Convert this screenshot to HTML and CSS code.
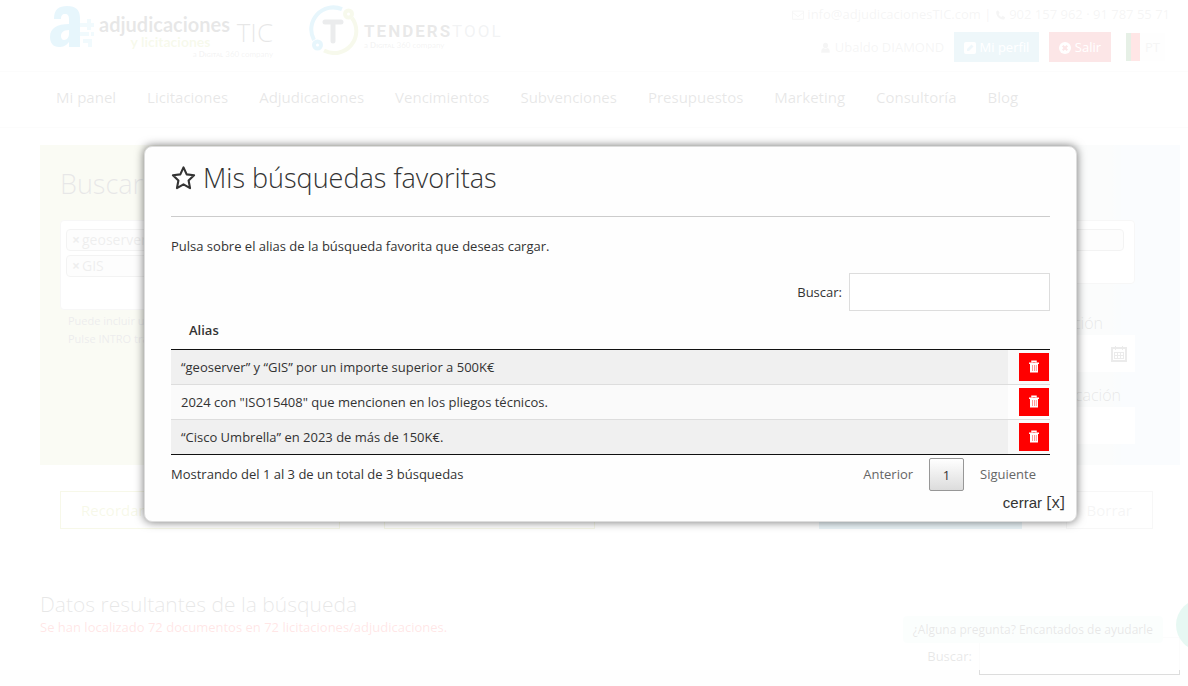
FILE: index.html
```html
<!DOCTYPE html>
<html lang="es">
<head>
<meta charset="utf-8">
<title>Mis búsquedas favoritas</title>
<link rel="stylesheet" href="styles.css">
</head>
<body>
<div class="page">
  <header class="header">
    <div class="brands">
      <a class="brand" href="#">
        <svg class="brand-mark" viewBox="0 0 46 46" aria-hidden="true">
          <path class="mark-blue" fill-rule="evenodd" d="M4 14C4 4 9 1 17 1c9 0 13 4 13 12v29H19v-5c-3 4-6 5-10 5C3 42 0 38 0 32c0-9 7-13 19-13v-5c0-3-1-5-4-5s-4 2-4 5zM19 25c-6 0-8 3-8 6 0 2 1 4 3 4 3 0 5-3 5-6z"/>
          <path class="mark-sky" d="M20 15h10v3h7v-4h4v4h3v4h-3v3h-4v-3h-7v5h9v4h-9v11H20zM41 27h3v4h-3zM33 34h9v8h-4v-4h-5z"/>
        </svg>
        <span class="brand-words">
          <span class="brand-name">adjudicaciones</span>
          <span class="brand-sub">y licitaciones</span>
        </span>
        <span class="brand-tic"><span class="tic">TIC</span><span class="company">a <b>Digital</b> 360 company</span></span>
      </a>
      <a class="brand tenders" href="#">
        <svg class="tenders-mark" viewBox="0 0 50 50" aria-hidden="true">
          <g fill="none" stroke-width="4">
            <path stroke="#0d9fe0" d="M33 4.200A22 22 0 0 0 5 35"/>
            <circle stroke="#0d9fe0" cx="8.500" cy="40" r="3.500"/>
            <path stroke="#a9c23f" d="M43 13A22 22 0 0 1 15 45.500"/>
            <circle stroke="#a9c23f" cx="39.500" cy="9" r="3.500"/>
            <path stroke="#33414d" stroke-width="5" stroke-linecap="round" d="M16 17h16M24 17v19"/>
          </g>
        </svg>
        <span class="tenders-words">
          <span class="tenders-name"><b>TENDERS</b>TOOL</span>
          <span class="company">a <b>Digital</b> 360 company</span>
        </span>
      </a>
    </div>
    <div class="account">
      <div class="contact">
        <svg class="ico" viewBox="0 0 14 14" aria-hidden="true"><path fill="none" stroke="currentColor" d="M.5 2.500h13v9.500H.5zM.5 4l6.500 5 6.500-5"/></svg>
        <a href="#">info@adjudicacionesTIC.com</a> |
        <svg class="ico phone" viewBox="0 0 12 14" aria-hidden="true"><path fill="currentColor" d="M1 3l2-1.500 2 3L4 6c.7 1.500 1.500 2.500 3 3.200L8.500 8l3 1.700L10.500 12C6 13.500 0 8 1 3z"/></svg>
        902 157 962 · 91 787 55 71
      </div>
      <div class="user-row">
        <span class="user"><svg class="ico user-ico" viewBox="0 0 12 14" aria-hidden="true"><circle fill="currentColor" cx="6" cy="4" r="3"/><path fill="currentColor" d="M1 12.500c0-4 1-5 2.500-5.500C5 8.300 7 8.300 8.500 7 10 7.500 11 8.500 11 12.500z"/></svg> Ubaldo DIAMOND</span>
        <button class="top-btn profile" type="button"><svg class="ico" viewBox="1 1 12 12" aria-hidden="true"><rect fill="#fff" x="1" y="1" width="12" height="12" rx="2"/><path fill="#5fb0d0" d="M4 10V8l4.500-4.500 2 2L6 10z"/></svg> Mi perfil</button>
        <button class="top-btn exit" type="button"><svg class="ico" viewBox="1 1 12 12" aria-hidden="true"><circle fill="#fff" cx="7" cy="7" r="6"/><path stroke="#d9000d" stroke-width="2" d="M4.700 4.700l4.600 4.600M9.300 4.700L4.700 9.300"/></svg> Salir</button>
        <a class="lang" href="#"><span class="flag"></span>PT</a>
      </div>
    </div>
  </header>

  <nav class="nav">
    <a href="#">Mi panel</a><a href="#">Licitaciones</a><a href="#">Adjudicaciones</a><a href="#">Vencimientos</a><a href="#">Subvenciones</a><a href="#">Presupuestos</a><a href="#">Marketing</a><a href="#">Consultoría</a><a href="#">Blog</a>
  </nav>

  <main class="main">
    <section class="search">
      <div class="search-left">
        <h1 class="search-title">Buscar</h1>
        <div class="tags tall">
          <span class="tag"><span class="tag-x">×</span>geoserver</span>
          <span class="tag"><span class="tag-x">×</span>GIS</span>
        </div>
        <p class="hint">Puede incluir un<br>Pulse INTRO tras</p>
      </div>
      <div class="search-right">
        <div class="tags"><span class="tag"></span></div>
        <label class="date-label" for="published">Publicación</label>
        <div class="date">
          <input class="field" id="published" type="text">
          <svg class="calendar" viewBox="0 0 16 16" aria-hidden="true"><path fill="none" stroke="currentColor" stroke-width="2" d="M1 2h14v13H1z"/><path fill="none" stroke="currentColor" d="M3 6.500h10M3 9.500h10M3 12.500h10M3.500 6v7M6.500 6v7M9.500 6v7M12.500 6v7M4.500 0v4M11.500 0v4"/></svg>
        </div>
        <label class="date-label long" for="awarded">Adjudicación</label>
        <div class="date"><input class="field" id="awarded" type="text"></div>
      </div>
    </section>

    <div class="actions">
      <button class="action remember" type="button">Recordar</button>
      <button class="action favorites" type="button" aria-label="Favoritas"></button>
      <button class="action submit" type="button" aria-label="Buscar"></button>
      <button class="action clear" type="button">Borrar</button>
    </div>

    <section class="results">
      <h2 class="results-title">Datos resultantes de la búsqueda</h2>
      <p class="results-count">Se han localizado 72 documentos en 72 licitaciones/adjudicaciones.</p>
      <div class="filter results-filter"><label for="filter-results">Buscar:</label><input class="filter-input" id="filter-results" type="text"></div>
    </section>
  </main>
  <div class="chat-hint">¿Alguna pregunta? Encantados de ayudarle</div>
  <button class="chat-bubble" type="button" aria-label="Chat"></button>
</div>

<div class="overlay"></div>
<div class="modal-wrap">
  <section class="modal" role="dialog" aria-labelledby="modal-title">
    <h2 class="modal-title" id="modal-title">
      <svg class="star" viewBox="0 0 26 26" aria-hidden="true"><path fill="none" stroke="currentColor" stroke-width="2.200" stroke-linejoin="round" d="M13 2l3.300 7.200 7.700 1-5.700 5.400L19.800 23.500 13 19.700l-6.800 3.800 1.500-7.900L2 10.200l7.700-1z"/></svg>
      Mis búsquedas favoritas
    </h2>
    <p class="modal-text">Pulsa sobre el alias de la búsqueda favorita que deseas cargar.</p>
    <div class="filter"><label for="filter-alias">Buscar:</label><input class="filter-input" id="filter-alias" type="text"></div>
    <table class="table">
      <thead><tr><th>Alias</th><th></th></tr></thead>
      <tbody>
        <tr><td>“geoserver” y “GIS” por un importe superior a 500K€</td><td class="tools"><button class="delete" type="button" aria-label="Eliminar"><svg class="trash" viewBox="0 0 12 13" aria-hidden="true"><path fill="none" stroke="#fff" stroke-width="1.500" d="M4 2.500V1.200h4v1.300"/><path fill="#fff" d="M1 2.500h10V4H1zM2 4h8v8.500H2z"/><path stroke="#f99" d="M4.500 5v6M6.500 5v6M8.300 5v6"/></svg></button></td></tr>
        <tr><td>2024 con "ISO15408" que mencionen en los pliegos técnicos.</td><td class="tools"><button class="delete" type="button" aria-label="Eliminar"><svg class="trash" viewBox="0 0 12 13" aria-hidden="true"><path fill="none" stroke="#fff" stroke-width="1.500" d="M4 2.500V1.200h4v1.300"/><path fill="#fff" d="M1 2.500h10V4H1zM2 4h8v8.500H2z"/><path stroke="#f99" d="M4.500 5v6M6.500 5v6M8.300 5v6"/></svg></button></td></tr>
        <tr><td>“Cisco Umbrella” en 2023 de más de 150K€.</td><td class="tools"><button class="delete" type="button" aria-label="Eliminar"><svg class="trash" viewBox="0 0 12 13" aria-hidden="true"><path fill="none" stroke="#fff" stroke-width="1.500" d="M4 2.500V1.200h4v1.300"/><path fill="#fff" d="M1 2.500h10V4H1zM2 4h8v8.500H2z"/><path stroke="#f99" d="M4.500 5v6M6.500 5v6M8.300 5v6"/></svg></button></td></tr>
      </tbody>
    </table>
    <div class="table-foot">
      <span>Mostrando del 1 al 3 de un total de 3 búsquedas</span>
      <div class="pager">
        <button class="page-btn" type="button">Anterior</button>
        <button class="page-btn current" type="button">1</button>
        <button class="page-btn" type="button">Siguiente</button>
      </div>
    </div>
    <button class="close" type="button">cerrar <span class="close-x">[x]</span></button>
  </section>
</div>
</body>
</html>
```
FILE: styles.css
```css
* { box-sizing: border-box; }
body {
  margin: 0;
  min-height: 100vh;
  overflow: hidden;
  background: #fefefe;
  color: #333;
  font: 13px/18px "Open Sans", "Noto Sans", sans-serif;
}
h1, h2, p { margin: 0; font-weight: 300; }
a { color: inherit; text-decoration: none; }
button, input { font: inherit; color: inherit; border-radius: 0; }
.page { position: relative; height: 100vh; overflow: hidden; color: #111; }

/* Header */
.header {
  display: flex;
  justify-content: space-between;
  height: 72px;
  padding: 5px 18px 0 50px;
  border-bottom: 1px solid #ddd;
}
.brands { display: flex; gap: 36px; }
.brand { display: flex; align-items: flex-start; }
.brand-mark { width: 46px; height: 46px; }
.mark-blue, .mark-sky { fill: #0d9fe0; }
.mark-sky { opacity: .6; }
.brand-words { display: flex; flex-direction: column; align-items: center; padding: 8px 7px 0 3px; }
.brand-name { font: bold 20px/22px "Lato", sans-serif; }
.brand-sub { margin-left: 12px; font: bold 14px/14px "Lato", sans-serif; color: #a9c23f; }
.brand-tic { display: flex; flex-direction: column; align-items: flex-end; width: 36px; padding-top: 9px; }
.tic { font: 300 26px/36px "Open Sans", sans-serif; }
.company { font: 8px/8px "Lato", sans-serif; white-space: nowrap; color: #888; }
.company b { font-variant: small-caps; }
.tenders-mark { width: 50px; height: 50px; }
.tenders-words { display: flex; flex-direction: column; padding: 16px 0 0 5px; }
.tenders-name { font: 17px/20px "Roboto", sans-serif; letter-spacing: 2px; color: #77838f; }
.tenders-name b { color: #222; }
.account { display: flex; flex-direction: column; align-items: flex-end; gap: 8px; color: #999; }
.contact { line-height: 19px; white-space: nowrap; }
.ico { width: 12px; height: 12px; vertical-align: -2px; }
.phone, .user-ico { width: 11px; }
.user-row { display: flex; align-items: center; gap: 10px; padding-right: 5px; }
.top-btn { height: 30px; padding: 0 10px; border: 0; color: #fff; }
.profile { background: #4fa9cd; }
.exit { background: #d9000d; }
.lang { display: flex; align-items: center; gap: 5px; height: 28px; margin-left: 5px; padding-right: 5px; background: #eee; }
.flag { width: 14px; height: 28px; background: linear-gradient(90deg, #006600 5px, #f00 5px); }

/* Navigation */
.nav {
  display: flex;
  gap: 31px;
  height: 56px;
  padding: 13px 0 0 56px;
  border-bottom: 1px solid #ddd;
  font-size: 15px;
  line-height: 24px;
}

/* Search form */
.main { padding: 17px 8px 0 40px; }
.search {
  display: flex;
  justify-content: space-between;
  height: 320px;
  padding: 20px 45px 20px 20px;
  background: linear-gradient(90deg, #c9d092 0 33%, #d8e3d6 66%, #cfe0e0 94%, #cde0ef 95%);
}
.search-left, .search-right { display: flex; flex-direction: column; width: 280px; }
.search-title { height: 55px; font-size: 27px; line-height: 37px; }
.tags {
  display: flex;
  flex-direction: column;
  gap: 4px;
  min-height: 64px;
  padding: 8px 10px 8px 5px;
  border: 1px solid #aaa;
  border-radius: 4px;
  background: #fff;
}
.tall { min-height: 90px; }
.tag { height: 22px; padding: 0 5px; border: 1px solid #888; border-radius: 4px; background: #e4e4e4; color: #555; font-size: 14px; line-height: 20px; }
.tag-x { margin-right: 2px; font-weight: bold; }
.hint { padding: 2px 8px; font-size: 11px; font-weight: 400; color: #444; }
.search-right { padding-top: 55px; }
.search-right .tags { margin-bottom: 28px; }
.date-label { height: 23px; padding-right: 32px; font-size: 16px; line-height: 23px; font-weight: 300; text-align: right; }
.long { padding-right: 14px; }
.date { position: relative; display: flex; margin-bottom: 12px; }
.field { width: 100%; height: 37px; border: 0; background: #fff; }
.calendar { position: absolute; right: 8px; top: 11px; width: 16px; height: 16px; color: #333; }

/* Form actions */
.actions { display: flex; padding: 26px 27px 0 20px; font-size: 15px; }
.action { height: 38px; padding: 0 20px; border: 1px solid #a9b820; background: transparent; color: #a9b820; text-align: left; }
.remember { width: 280px; margin-right: 44px; }
.favorites { width: 211px; }
.submit { width: 203px; margin: 0 44px 0 auto; border: 0; background: #2d8fb5; }
.clear { border-color: #aaa; color: #999; }

/* Results */
.results { display: flex; flex-direction: column; padding-top: 61px; }
.results-title { font-size: 21px; line-height: 28px; }
.results-count { margin-bottom: 1px; color: #f00; font-weight: 400; }
.filter { display: flex; align-items: center; justify-content: flex-end; gap: 7px; line-height: 20px; }
.filter-input { width: 201px; height: 38px; border: 1px solid #ddd; background: #fff; }
.chat-hint { position: absolute; right: 25px; bottom: 43px; padding: 4px 10px; border-radius: 4px; background: #d8f3ea; font-size: 12px; line-height: 19px; }
.chat-bubble { position: absolute; right: -40px; bottom: 35px; width: 52px; height: 52px; border: 0; border-radius: 50%; background: #10b981; }
.overlay { position: absolute; inset: 0 0 16px; background: rgba(255, 255, 255, .9); }

/* Favourites dialog */
.modal-wrap { position: absolute; inset: 0; padding: 146px 111px 0 144px; }
.modal {
  display: flex;
  flex-direction: column;
  padding: 13px 26px 7px;
  border: 1px solid #ddd;
  border-radius: 8px;
  background: #fefefe;
  box-shadow: 0 0 10px rgba(0, 0, 0, .55);
}
.modal-title {
  display: flex;
  align-items: center;
  gap: 7px;
  padding-bottom: 20px;
  border-bottom: 1px solid #ccc;
  font-size: 27px;
  line-height: 36px;
}
.star { width: 25px; height: 26px; }
.modal-text { margin: 20px 0 18px; font-weight: 400; }
.table { width: 100%; border-collapse: collapse; border-bottom: 1px solid #111; }
.table th { height: 38px; padding: 0 18px; border-bottom: 1px solid #111; text-align: left; font-weight: 600; }
.table td { height: 35px; padding: 0 10px; border-top: 1px solid #ddd; background: #fafafa; }
.table tbody tr:nth-child(odd) td { background: #f0f0f0; }
.table tbody tr:first-child td { border-top: 0; }
.table .tools { width: 42px; padding: 0 1px 0 0; text-align: right; background: #fefefe; }
.table tbody tr:nth-child(odd) .tools { background: #fafafa; }
.delete { display: flex; align-items: center; justify-content: center; width: 30px; height: 28px; margin-left: auto; padding: 0; border: 0; background: #f00; }
.trash { width: 12px; height: 13px; }
.table-foot { display: flex; justify-content: space-between; padding-top: 3px; line-height: 33px; }
.pager { display: flex; gap: 2px; }
.page-btn { height: 33px; padding: 0 14px; border: 0; background: transparent; color: #666; }
.page-btn.current { width: 35px; padding: 0; border: 1px solid #979797; border-radius: 2px; background: linear-gradient(#fff, #dcdcdc); color: #333; }
.close { align-self: flex-end; margin-right: -15px; padding: 0; border: 0; background: transparent; font: 15px/22px "Liberation Sans", sans-serif; }
.close-x { font: 16px/22px "Open Sans", sans-serif; }
```
